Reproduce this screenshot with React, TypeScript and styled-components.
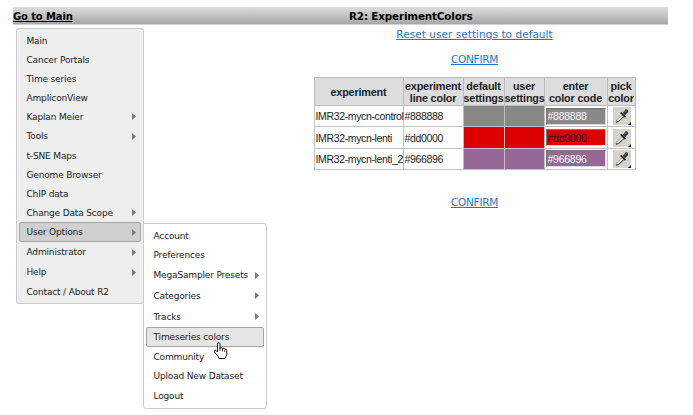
import React from "react";
import styled, { createGlobalStyle } from "styled-components";

const GlobalStyle = createGlobalStyle`
  * { box-sizing: border-box; }
  body { margin: 0; background: #fff; overflow: hidden; }
`;

const Page = styled.div`
  width: 693px;
  height: 415px;
  padding: 7px 25px 0 13px;
  font-family: "DejaVu Sans", Verdana, sans-serif;
  color: #222;
`;

const TitleBar = styled.header`
  display: grid;
  grid-template-columns: 336px 1fr;
  height: 18px;
  line-height: 19px;
  background: linear-gradient(#dcdcdc, #c4c4c4 45%, #a8a8a8 92%, #c9c9c9 95%, #dedede);
  font-weight: bold;
  font-size: 10px;
  color: #000;
  white-space: nowrap;
`;

const HomeLink = styled.a`
  justify-self: start;
  letter-spacing: -0.12px;
  text-decoration: underline;
`;

const Title = styled.span`
  font-size: 10.4px;
  letter-spacing: -0.17px;
`;

const Body = styled.div`
  display: flex;
  padding: 3px 0 0 3px;
`;

const Menu = styled.nav`
  position: relative;
  width: 128px;
  height: 276px;
  flex: none;
  padding: 2px 2px;
  background: #eee;
  border: 1px solid #ccc;
  border-radius: 3px;
`;

const Submenu = styled.div`
  position: absolute;
  left: 126px;
  top: 194px;
  width: 124px;
  height: 186px;
  padding: 2px 2px;
  background: #fff;
  border: 1px solid #ccc;
  border-radius: 0 3px 3px 3px;
`;

const MenuItem = styled.div<{ $h: number; $active?: "dark" | "light" }>`
  display: flex;
  align-items: center;
  justify-content: space-between;
  height: ${(p) => p.$h}px;
  padding: 0 4px 0 6.5px;
  border: 1px solid ${(p) => (p.$active ? "#a6a6a6" : "transparent")};
  border-radius: 2px;
  background: ${(p) => (p.$active === "dark" ? "#d0d0d0" : p.$active === "light" ? "#e6e6e6" : "transparent")};
  font-size: 9px;
  line-height: 12px;
  letter-spacing: -0.16px;
  white-space: nowrap;
`;

const Arrow = styled.svg`
  display: block;
  width: 4px;
  height: 7px;
  fill: #777;
`;

const Content = styled.main`
  display: flex;
  flex-direction: column;
  align-items: center;
  width: 321px;
  margin-left: 170px;
`;

const Link = styled.a<{ $top: number; $spacing: number }>`
  margin-top: ${(p) => p.$top}px;
  height: 14px;
  line-height: 14px;
  font-size: 10.5px;
  letter-spacing: ${(p) => p.$spacing}px;
  color: #1b75d1;
  text-decoration: underline;
  white-space: nowrap;
`;

const ColorTable = styled.table`
  width: 321px;
  margin-top: 11px;
  table-layout: fixed;
  border-collapse: collapse;
  font-family: "Liberation Sans", Arial, sans-serif;
  font-size: 10.8px;
  line-height: 12px;
  white-space: nowrap;
`;

const HeadCell = styled.th`
  height: 28px;
  padding: 1px 0 0;
  background: #ddd;
  border: 1px solid #bbb;
  color: #222;
  text-align: center;
  letter-spacing: -0.16px;
`;

const Cell = styled.td<{ $fill?: string }>`
  height: 21.4px;
  padding: 0 0 0 1px;
  border: 1px solid #c0c0c0;
  background: ${(p) => p.$fill ?? "#fff"};
  font-size: 10.5px;
  letter-spacing: -0.36px;
`;

const CodeInput = styled.input<{ $fill: string; $ink: string }>`
  display: block;
  width: 60px;
  height: 17px;
  padding: 0 0 0 1px;
  border: 1px solid;
  border-color: #777 #ddd #ddd #777;
  background: ${(p) => p.$fill};
  color: ${(p) => p.$ink};
  font: 10.5px "Liberation Sans", Arial, sans-serif;
  letter-spacing: -0.25px;
`;

const PickerButton = styled.button`
  display: block;
  width: 18px;
  height: 18px;
  margin: 0 auto;
  padding: 0;
  border: 0;
  background: #d6d3cb;
`;

const MENU: [string, number, boolean?][] = [
  ["Main", 19], ["Cancer Portals", 19], ["Time series", 19], ["AmpliconView", 19],
  ["Kaplan Meier", 19, true], ["Tools", 20, true], ["t-SNE Maps", 19], ["Genome Browser", 19],
  ["ChIP data", 19], ["Change Data Scope", 19, true], ["User Options", 20, true],
  ["Administrator", 20, true], ["Help", 20, true], ["Contact / About R2", 19],
];

const SUBMENU: [string, number, boolean?][] = [
  ["Account", 19], ["Preferences", 20], ["MegaSampler Presets", 20, true], ["Categories", 21, true],
  ["Tracks", 21, true], ["Timeseries colors", 20], ["Community", 19],
  ["Upload New Dataset", 20], ["Logout", 20],
];

const ROWS = [
  { name: "IMR32-mycn-control", code: "#888888", ink: "#fff" },
  { name: "IMR32-mycn-lenti", code: "#dd0000", ink: "#111" },
  { name: "IMR32-mycn-lenti_2", code: "#966896", ink: "#fff" },
];

const HandCursor = styled.svg`
  position: absolute;
  left: 69px;
  top: 118px;
  width: 15px;
  height: 18px;
`;

const MenuArrow = () => (
  <Arrow viewBox="0 0 4 7"><path d="M0 0L4 3.5L0 7Z" /></Arrow>
);

const Dropper = () => (
  <svg width="18" height="18" viewBox="0 0 18 18">
    <path d="M3 15.2l.7-2.2 6-6 1.9 1.9-6 6z" fill="#eef0ee" stroke="#858585" strokeWidth=".8" />
    <path d="M3 15.3l2.8-1.1L11.5 9" fill="none" stroke="#333" strokeWidth=".9" />
    <path d="M8.2 4.8l5 5-1.4 1-4.7-4.7z" fill="#202426" />
    <path d="M9.8 6l2.4-3.3c1.2-1.4 4 .9 2.7 2.5L12 8.2z" fill="#30373a" />
    <path d="M11.5 5.2l1.6-1.8" stroke="#a4aaac" strokeWidth=".8" />
    <path d="M18 15v3h-3z" fill="#000" />
  </svg>
);

export default function App() {
  return (
    <>
      <GlobalStyle />
      <Page>
        <TitleBar>
          <HomeLink>Go to Main</HomeLink>
          <Title>R2: ExperimentColors</Title>
        </TitleBar>
        <Body>
          <Menu>
            {MENU.map(([label, h, more]) => (
              <MenuItem key={label} $h={h} $active={label === "User Options" ? "dark" : undefined}>
                {label}{more && <MenuArrow />}
              </MenuItem>
            ))}
            <Submenu>
              {SUBMENU.map(([label, h, more]) => (
                <MenuItem key={label} $h={h} $active={label === "Timeseries colors" ? "light" : undefined}>
                  {label}{more && <MenuArrow />}
                </MenuItem>
              ))}
              <HandCursor viewBox="0 0 15 18">
                <path
                  d="M4.5 10V2.2C4.5.3 7 .3 7 2.2V6.5c.2-1 2.4-1 2.5.3.5-.8 2.2-.5 2.3.6.8-.6 2 0 2 1.1V12c0 1.8-1.5 2.5-1.5 4.5H6c0-2-3-4-4.6-6.8-.7-1.5 1-2.2 2-.8z"
                  fill="#fff" stroke="#111" strokeLinejoin="round"
                />
                <path d="M7 6v3M9.5 7v2.5M11.8 8v2" stroke="#111" strokeWidth=".8" />
              </HandCursor>
            </Submenu>
          </Menu>
          <Content>
            <Link $top={-1} $spacing={0.05}>Reset user settings to default</Link>
            <Link $top={11} $spacing={-0.25}>CONFIRM</Link>
            <ColorTable>
              <colgroup>
                <col width="89" /><col width="60" /><col width="41" />
                <col width="40" /><col width="63" /><col width="28" />
              </colgroup>
              <thead>
                <tr>
                  <HeadCell>experiment</HeadCell>
                  <HeadCell>experiment<br />line color</HeadCell>
                  <HeadCell>default<br />settings</HeadCell>
                  <HeadCell>user<br />settings</HeadCell>
                  <HeadCell>enter<br />color code</HeadCell>
                  <HeadCell>pick<br />color</HeadCell>
                </tr>
              </thead>
              <tbody>
                {ROWS.map(({ name, code, ink }) => (
                  <tr key={name}>
                    <Cell>{name}</Cell>
                    <Cell>{code}</Cell>
                    <Cell $fill={code} />
                    <Cell $fill={code} />
                    <Cell><CodeInput defaultValue={code} $fill={code} $ink={ink} /></Cell>
                    <Cell><PickerButton aria-label={name}><Dropper /></PickerButton></Cell>
                  </tr>
                ))}
              </tbody>
            </ColorTable>
            <Link $top={25} $spacing={-0.25}>CONFIRM</Link>
          </Content>
        </Body>
      </Page>
    </>
  );
}
